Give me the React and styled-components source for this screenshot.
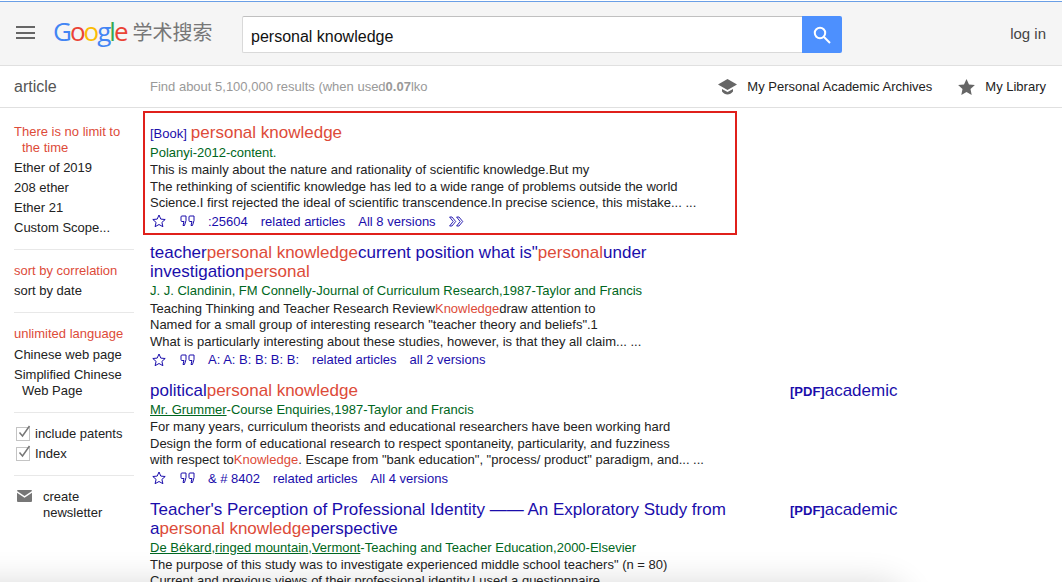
import React from "react";
import styled, { createGlobalStyle } from "styled-components";

const Global = createGlobalStyle`
  html { background: #fff; }
  body { margin: 0; padding: 0; font-family: "Liberation Sans", Arial, sans-serif; color: #222; overflow: hidden; }
`;

const Page = styled.div`
  position: relative;
  width: 1062px;
  height: 582px;
  box-sizing: border-box;
  padding-top: 1px;
  overflow: hidden;
`;
const Header = styled.header`
  height: 63px;
  border-top: 1px solid #6a9fe6;
  border-bottom: 1px solid #e0e0e0;
  background: #f5f5f5;
  display: flex;
  align-items: center;
  padding: 0 16px 0 16px;
`;
const Burger = styled.div`
  width: 19px;
  height: 13px;
  margin-top: -2px;
  margin-right: 19px;
  display: flex;
  flex-direction: column;
  justify-content: space-between;
  & > i { display: block; height: 2px; background: #666; }
`;
const Logo = styled.div`
  display: flex;
  align-items: center;
  width: 188px;
  margin-top: -5px;
`;
const GoogleWord = styled.span`
  font-family: "Open Sans", sans-serif;
  font-size: 26px;
  letter-spacing: -2px;
  line-height: 30px;
  margin-left: -1px;
`;
const Letter = styled.span`
  color: ${(p) => p.$c};
`;
const ScholarWord = styled.span`
  font-family: "Noto Sans CJK SC", sans-serif;
  font-size: 20px;
  color: #777;
  margin-left: 6px;
`;
const SearchForm = styled.div`
  display: flex;
  width: 600px;
  height: 37px;
  margin-top: 2px;
`;
const SearchInput = styled.div`
  flex: 1;
  background: #fff;
  border: 1px solid #d9d9d9;
  border-top-color: #c0c0c0;
  border-right: none;
  border-radius: 2px 0 0 2px;
  font-size: 16px;
  line-height: 39px;
  height: 35px;
  padding-left: 8px;
  color: #111;
`;
const SearchButton = styled.div`
  width: 40px;
  background: #4d90fe;
  border-radius: 0 2px 2px 0;
  display: flex;
  align-items: center;
  justify-content: center;
`;
const Login = styled.div`
  margin-left: auto;
  font-size: 15px;
  color: #444;
`;
const SubBar = styled.div`
  height: 41px;
  border-bottom: 1px solid #e0e0e0;
  display: flex;
  align-items: center;
  padding: 0 16px 0 14px;
`;
const SectionName = styled.div`
  width: 136px;
  font-size: 16px;
  color: #555;
`;
const Stats = styled.div`
  font-size: 13px;
  color: #999;
  & b { font-weight: bold; }
`;
const SubLinks = styled.div`
  margin-left: auto;
  display: flex;
  align-items: center;
  font-size: 13px;
  color: #222;
`;
const SubLink = styled.span`
  display: flex;
  align-items: center;
  gap: 10px;
  margin-left: 26px;
`;
const Body = styled.div`
  display: flex;
  align-items: flex-start;
`;
const Sidebar = styled.aside`
  width: 120px;
  margin-left: 14px;
  margin-right: 9px;
  padding-top: 14px;
  font-size: 13px;
  flex: none;
`;
const SideGroup = styled.div`
  padding-top: ${(p) => p.$pt || 0}px;
  padding-bottom: 11px;
  margin-bottom: 11px;
  border-bottom: ${(p) => (p.$last ? "none" : "1px solid #e8e8e8")};
`;
const SideItem = styled.div`
  color: ${(p) => (p.$active ? "#dd4b39" : "#222")};
  line-height: 16px;
  padding: 2px 0 2px 8px;
  text-indent: -8px;
  margin-top: ${(p) => p.$mt || 0}px;
`;
const CheckRow = styled.div`
  display: flex;
  align-items: center;
  gap: 5px;
  line-height: 16px;
  padding: 2px 0;
  color: #222;
  margin-left: 2px;
`;
const CheckBox = styled.span`
  position: relative;
  width: 12px;
  height: 12px;
  border: 1px solid #c4c4c4;
  flex: none;
  background: #fff;
  & > svg { position: absolute; left: 0; top: -4px; }
`;
const MailRow = styled.div`
  display: flex;
  gap: 11px;
  line-height: 16px;
  margin-left: 3px;
  color: #222;
  & > svg { flex: none; margin-top: 1px; }
`;
const Results = styled.main`
  width: 800px;
  padding-top: 3px;
  flex: none;
`;
const Result = styled.article`
  display: flex;
  padding: ${(p) => (p.$boxed ? "10px 5px 3px 5px" : "0 7px")};
  border: ${(p) => (p.$boxed ? "2px solid #e0201b" : "none")};
  width: ${(p) => (p.$boxed ? "594px" : "auto")};
  box-sizing: border-box;
  margin-bottom: ${(p) => (p.$boxed ? "8px" : "13px")};
`;
const Main = styled.div`
  width: 582px;
  flex: none;
`;
const Title = styled.h3`
  margin: 0;
  font-weight: normal;
  font-size: 17px;
  line-height: 19px;
  color: #1a0dab;
`;
const Hit = styled.span`
  color: #dd4b39;
`;
const BookTag = styled.span`
  font-size: 13px;
  margin-right: 4px;
`;
const Meta = styled.div`
  font-size: 13px;
  line-height: 16px;
  margin-top: 2px;
  color: #006621;
  & u { text-decoration: underline; }
`;
const Snippet = styled.div`
  font-size: 13px;
  line-height: 16.5px;
  margin-top: ${(p) => p.$mt || 1}px;
  color: #222;
`;
const Actions = styled.div`
  display: flex;
  align-items: center;
  height: 17px;
  margin-top: 1px;
  font-size: 13px;
  color: #1a0dab;
  padding-left: 2px;
`;
const IconSlot = styled.span`
  display: flex;
  width: 28px;
  flex: none;
`;
const ActionText = styled.span`
  margin-right: 13px;
`;
const Side = styled.div`
  margin-left: 58px;
  font-size: 17px;
  line-height: 19px;
  color: #1a0dab;
  white-space: nowrap;
  & b { font-size: 13px; }
`;
const BottomShadow = styled.div`
  position: absolute;
  z-index: -1;
  left: -60px;
  top: 590px;
  width: 960px;
  height: 40px;
  box-shadow: 0 0 34px 6px rgba(0, 0, 0, 0.16);
  border-radius: 20px;
`;

const Star = () => (
  <svg width="14" height="14" viewBox="0 0 14 14" fill="none" stroke="#1a0dab" strokeWidth="1">
    <path d="M7 1l1.800 4.100 4.400.4-3.300 2.900 1 4.300L7 10.500l-3.900 2.200 1-4.300L.8 5.500l4.400-.4z" />
  </svg>
);
const Quote = () => (
  <svg width="15" height="12" viewBox="0 0 15 12" fill="none" stroke="#1a0dab" strokeWidth="1">
    <path d="M2 1h4v4.500L4.500 10.500H3L4 6.500H2a1 1 0 0 1-1-1V2a1 1 0 0 1 1-1zM10 1h4v4.500l-1.500 5H11l1-4h-2a1 1 0 0 1-1-1V2a1 1 0 0 1 1-1z" />
  </svg>
);
const More = () => (
  <svg width="15" height="11" viewBox="0 0 15 11" fill="none" stroke="#1a0dab" strokeWidth="0.9">
    <path d="M.6 1h2.400l3.700 4.500L3 10H.6l3.600-4.500zM7.600 1H10l3.700 4.500L10 10H7.600l3.600-4.500z" />
  </svg>
);
const Check = () => (
  <svg width="15" height="15" viewBox="0 0 15 15" fill="none" stroke="#777" strokeWidth="1.500">
    <path d="M2.500 8.500l3 3.500 7-10" />
  </svg>
);

const ActionIcons = () => (
  <>
    <IconSlot><Star /></IconSlot>
    <IconSlot><Quote /></IconSlot>
  </>
);

export default function App() {
  return (
    <Page>
      <Global />
      <BottomShadow />
      <Header>
        <Burger><i /><i /><i /></Burger>
        <Logo>
          <GoogleWord>
            <Letter $c="#4285f4">G</Letter>
            <Letter $c="#ea4335">o</Letter>
            <Letter $c="#fbbc05">o</Letter>
            <Letter $c="#4285f4">g</Letter>
            <Letter $c="#34a853">l</Letter>
            <Letter $c="#ea4335">e</Letter>
          </GoogleWord>
          <ScholarWord>学术搜索</ScholarWord>
        </Logo>
        <SearchForm>
          <SearchInput>personal knowledge</SearchInput>
          <SearchButton>
            <svg width="18" height="18" viewBox="0 0 18 18" fill="none" stroke="#fff" strokeWidth="2">
              <circle cx="7" cy="7" r="5.200" />
              <path d="M11 11l6 6" />
            </svg>
          </SearchButton>
        </SearchForm>
        <Login>log in</Login>
      </Header>
      <SubBar>
        <SectionName>article</SectionName>
        <Stats>Find about 5,100,000 results (when used<b>0.07</b>lko</Stats>
        <SubLinks>
          <SubLink>
            <svg width="19" height="16" viewBox="0 0 19 16" fill="#666">
              <path d="M9.500 0L19 5.500l-9.500 5.500L0 5.500z" />
              <path d="M4 10v2.500c1.500 2 3.500 3 5.500 3s4-1 5.500-3V10l-5.500 3z" />
            </svg>
            My Personal Academic Archives
          </SubLink>
          <SubLink>
            <svg width="17" height="16" viewBox="0 0 17 16" fill="#666">
              <path d="M8.500 0l2.500 5.400 5.900.7-4.400 4 1.200 5.900-5.200-3-5.200 3 1.200-5.900-4.400-4 5.900-.7z" />
            </svg>
            My Library
          </SubLink>
        </SubLinks>
      </SubBar>
      <Body>
        <Sidebar>
          <SideGroup>
            <SideItem $active>There is no limit to the time</SideItem>
            <SideItem>Ether of 2019</SideItem>
            <SideItem>208 ether</SideItem>
            <SideItem>Ether 21</SideItem>
            <SideItem>Custom Scope...</SideItem>
          </SideGroup>
          <SideGroup>
            <SideItem $active>sort by correlation</SideItem>
            <SideItem>sort by date</SideItem>
          </SideGroup>
          <SideGroup>
            <SideItem $active>unlimited language</SideItem>
            <SideItem $mt={1}>Chinese web page</SideItem>
            <SideItem>Simplified Chinese Web Page</SideItem>
          </SideGroup>
          <SideGroup>
            <CheckRow><CheckBox><Check /></CheckBox>include patents</CheckRow>
            <CheckRow><CheckBox><Check /></CheckBox>Index</CheckRow>
          </SideGroup>
          <SideGroup $last $pt={2}>
            <MailRow>
              <svg width="15" height="12" viewBox="0 0 15 12" fill="#777">
                <path d="M1 0h13a1 1 0 0 1 1 1L7.500 6 0 1a1 1 0 0 1 1-1z" />
                <path d="M0 2.800l7.500 5 7.500-5V11a1 1 0 0 1-1 1H1a1 1 0 0 1-1-1z" />
              </svg>
              <span>create<br />newsletter</span>
            </MailRow>
          </SideGroup>
        </Sidebar>
        <Results>
          <Result $boxed>
            <Main>
              <Title><BookTag>[Book]</BookTag><Hit>personal knowledge</Hit></Title>
              <Meta>Polanyi-2012-content.</Meta>
              <Snippet>
                This is mainly about the nature and rationality of scientific knowledge.But my<br />
                The rethinking of scientific knowledge has led to a wide range of problems outside the world<br />
                Science.I first rejected the ideal of scientific transcendence.In precise science, this mistake... ...
              </Snippet>
              <Actions>
                <ActionIcons />
                <ActionText>:25604</ActionText>
                <ActionText>related articles</ActionText>
                <ActionText>All 8 versions</ActionText>
                <More />
              </Actions>
            </Main>
          </Result>
          <Result>
            <Main>
              <Title>teacher<Hit>personal knowledge</Hit>current position what is"<Hit>personal</Hit>under investigation<Hit>personal</Hit></Title>
              <Meta>J. J. Clandinin, FM Connelly-Journal of Curriculum Research,1987-Taylor and Francis</Meta>
              <Snippet $mt={2}>
                Teaching Thinking and Teacher Research Review<Hit>Knowledge</Hit>draw attention to<br />
                Named for a small group of interesting research "teacher theory and beliefs".1<br />
                What is particularly interesting about these studies, however, is that they all claim... ...
              </Snippet>
              <Actions>
                <ActionIcons />
                <ActionText>A: A: B: B: B: B:</ActionText>
                <ActionText>related articles</ActionText>
                <ActionText>all 2 versions</ActionText>
              </Actions>
            </Main>
          </Result>
          <Result>
            <Main>
              <Title>political<Hit>personal knowledge</Hit></Title>
              <Meta><u>Mr. Grummer</u>-Course Enquiries,1987-Taylor and Francis</Meta>
              <Snippet>
                For many years, curriculum theorists and educational researchers have been working hard<br />
                Design the form of educational research to respect spontaneity, particularity, and fuzziness<br />
                with respect to<Hit>Knowledge</Hit>. Escape from "bank education", "process/ product" paradigm, and... ...
              </Snippet>
              <Actions>
                <ActionIcons />
                <ActionText>&amp; # 8402</ActionText>
                <ActionText>related articles</ActionText>
                <ActionText>All 4 versions</ActionText>
              </Actions>
            </Main>
            <Side><b>[PDF]</b>academic</Side>
          </Result>
          <Result>
            <Main>
              <Title>Teacher's Perception of Professional Identity —— An Exploratory Study from a<Hit>personal knowledge</Hit>perspective</Title>
              <Meta><u>De Békard</u>,<u>ringed mountain</u>,<u>Vermont</u>-Teaching and Teacher Education,2000-Elsevier</Meta>
              <Snippet>
                The purpose of this study was to investigate experienced middle school teachers" (n = 80)<br />
                Current and previous views of their professional identity.I used a questionnaire
              </Snippet>
            </Main>
            <Side><b>[PDF]</b>academic</Side>
          </Result>
        </Results>
      </Body>
    </Page>
  );
}
